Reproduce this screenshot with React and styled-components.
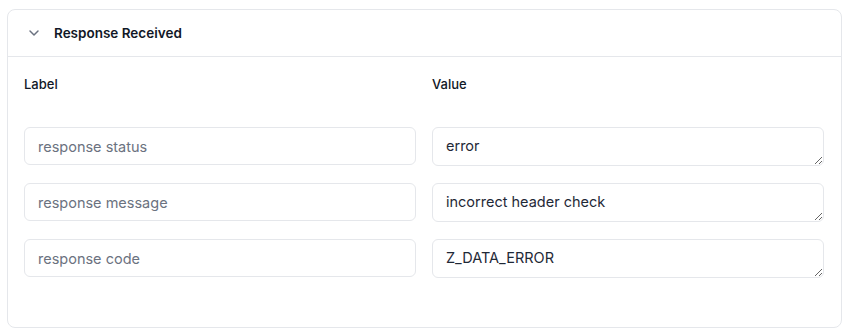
import React from "react";
import styled, { createGlobalStyle } from "styled-components";

const GlobalStyle = createGlobalStyle`
  body {
    margin: 0;
    background: #ffffff;
    font-family: Inter, "Noto Sans", sans-serif;
  }
`;

const Page = styled.div`
  padding: 9px 3px 6px 7px;
`;

const Card = styled.div`
  border: 1px solid #e5e7eb;
  border-radius: 8px;
  background: #fff;
`;

const Header = styled.div`
  display: flex;
  align-items: center;
  gap: 12px;
  height: 46px;
  padding: 0 18px;
  border-bottom: 1px solid #e5e7eb;
`;

const Title = styled.span`
  font-size: 13.5px;
  font-weight: 600;
  color: #111827;
`;

const Body = styled.div`
  display: grid;
  grid-template-columns: 1fr 1fr;
  align-items: start;
  column-gap: 16px;
  row-gap: 17px;
  padding: 17px 17px 49px 16px;
`;

const ColLabel = styled.div`
  font-size: 13px;
  font-weight: 500;
  color: #111827;
  line-height: 20px;
  margin-bottom: 16px;
`;

const Input = styled.input`
  box-sizing: border-box;
  width: 100%;
  height: 38px;
  border: 1px solid #e5e7eb;
  border-radius: 6px;
  padding: 0 13px;
  font-family: inherit;
  font-size: 14.5px;
  color: #1f2937;
  outline: none;
  &::placeholder {
    color: #6b7280;
  }
`;

const Area = styled.textarea`
  box-sizing: border-box;
  display: block;
  width: 100%;
  height: 39px;
  border: 1px solid #e5e7eb;
  border-radius: 6px;
  padding: 8px 13px;
  font-family: inherit;
  font-size: 14.5px;
  line-height: 20px;
  color: #1f2937;
  resize: vertical;
  outline: none;
  overflow: hidden;
`;

const Chevron = () => (
  <svg width="16" height="16" viewBox="0 0 24 24" fill="none" stroke="#6b7280" strokeWidth="2.2" strokeLinecap="round" strokeLinejoin="round">
    <path d="M6 9l6 6 6-6" />
  </svg>
);

const rows = [
  { label: "response status", value: "error" },
  { label: "response message", value: "incorrect header check" },
  { label: "response code", value: "Z_DATA_ERROR" },
];

export default function App() {
  return (
    <>
      <GlobalStyle />
      <Page>
        <Card>
          <Header>
            <Chevron />
            <Title>Response Received</Title>
          </Header>
          <Body>
            <ColLabel>Label</ColLabel>
            <ColLabel>Value</ColLabel>
            {rows.map((r) => (
              <React.Fragment key={r.label}>
                <Input placeholder={r.label} readOnly />
                <Area defaultValue={r.value} rows={1} />
              </React.Fragment>
            ))}
          </Body>
        </Card>
      </Page>
    </>
  );
}
